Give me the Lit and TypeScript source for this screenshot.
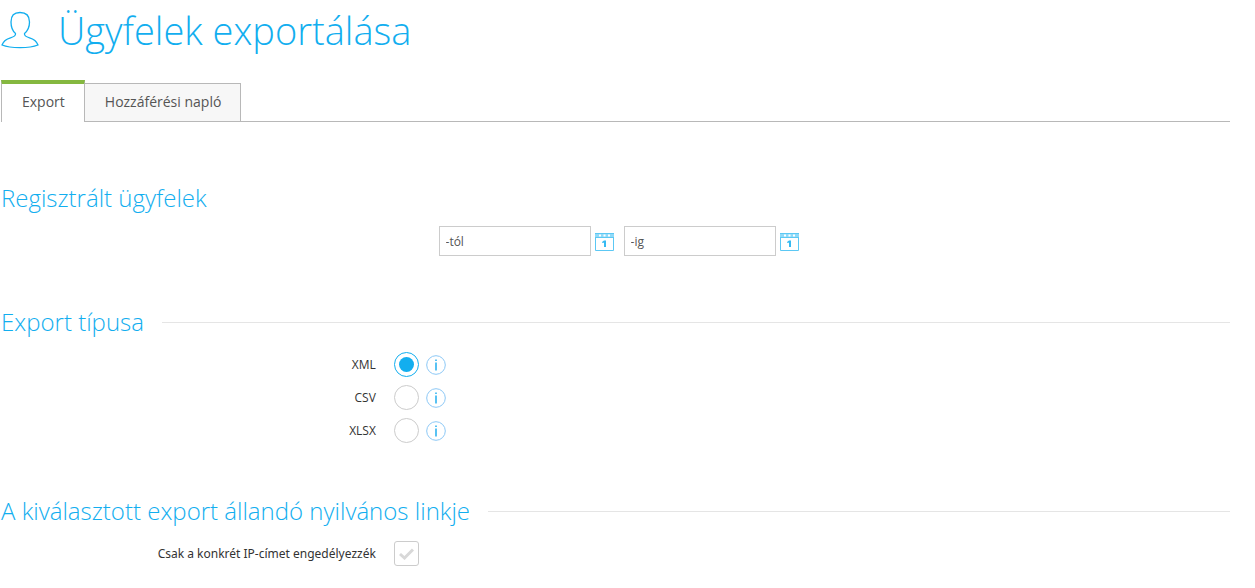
import { LitElement, html, css } from "lit";
import { customElement, state } from "lit/decorators.js";

const userIcon = html`<svg class="user" width="38" height="38" viewBox="0 0 38 38" fill="none" stroke="currentColor" stroke-width="1.3" aria-hidden="true">
  <path d="M14.500 22.500C11.500 20 10 16 10 11C10 4.500 13 1.500 19 1.500S28.500 4.500 28.500 11C28.500 16 26.500 20 23.500 22.500C23 25 25 25.800 28.500 26.800C33.500 28.200 35.500 30 37 34C32 36 26 36.600 19 36.600S6 36 1 34C2.500 30 4.500 28.200 9.500 26.800C13 25.800 15 25 14.500 22.500Z"/>
</svg>`;

const calendarIcon = html`<svg width="19" height="19" viewBox="0 0 19 19" aria-hidden="true">
  <path d="M0 1H19V6H0Z" fill="#90daf8"/>
  <path d="M0.500 5.500V18.500H18.500V5.500" fill="none" stroke="#5cc8f4"/>
  <path d="M0 1.500H19M0 5.500H19" stroke="#5cc8f4"/>
  <path d="M4 3.500h2M8.500 3.500h2M13 3.500h2" stroke="#fff" stroke-width="2"/>
  <path d="M7 10l2-1.500h2V15H9V10.800H7Z" fill="#35baf2"/>
</svg>`;

const infoIcon = html`<svg width="20" height="20" viewBox="0 0 20 20" fill="none" aria-hidden="true">
  <circle cx="10" cy="10" r="9.300" stroke="#8cc8f6"/>
  <path d="M10 7.500V15.500M10 4.500V6" stroke="#12a9ee" stroke-width="1.400"/>
</svg>`;

@customElement("app-root")
export class AppRoot extends LitElement {
  @state() private type = "XML";

  static styles = css`
    :host { display: block; font-family: "Open Sans", sans-serif; color: #333; background: #fff; font-size: 12px; line-height: 18px; }
    * { box-sizing: border-box; }
    main { padding: 0 25px 16px 1px; }
    svg { display: block; flex: none; }
    h1, h2 { margin: 0; font-weight: 300; color: #12aeef; }
    h1 { display: flex; align-items: center; gap: 19px; font-size: 38px; line-height: 60px; }
    h2 { display: flex; align-items: center; gap: 18px; margin-bottom: 10px; font-size: 24px; line-height: 32px; }
    .ruled::after { content: ""; flex: 1; height: 1px; background: #e5e5e5; }
    .tabs { display: flex; align-items: flex-end; margin: 20px 0 60px; border-bottom: 1px solid #b8b8b8; }
    .tab { height: 38px; padding: 0 19px 0 20px; border: solid #b8b8b8; border-width: 1px 1px 0 0; background: #f7f7f7; color: #555; font-size: 14px; line-height: 36px; text-decoration: none; }
    .tab.active { height: 42px; margin-bottom: -1px; border-width: 4px 1px 0 1px; border-top-color: #85b840; background: #fff; }
    section + section { margin-top: 48px; }
    .dates { display: flex; align-items: center; gap: 10px; height: 34px; padding-left: 35.6%; }
    .date { display: flex; align-items: center; gap: 4px; }
    .date input { width: 152px; height: 30px; margin: 0; padding: 0 6px; border: 1px solid #ccc; border-radius: 0; font: inherit; color: #555; }
    .date input::placeholder { color: #555; opacity: 1; }
    button { padding: 0; border: 0; background: none; cursor: pointer; }
    .row { display: grid; grid-template-columns: 30.5% 1fr; column-gap: 18px; align-items: center; height: 33px; }
    .row label { text-align: right; }
    .wide { font-family: "Noto Sans", "Open Sans", sans-serif; }
    .control { display: flex; align-items: center; gap: 7px; }
    .radio, .check { display: grid; place-items: center; appearance: none; width: 25px; height: 25px; margin: 0; border: 1px solid #ccc; background: #fff; }
    .radio { border-radius: 50%; }
    .radio:checked { border-color: #12aeef; }
    .radio:checked::before { content: ""; width: 15px; height: 15px; border-radius: 50%; background: #12aeef; }
    .check-box { display: grid; }
    .check-box > * { grid-area: 1 / 1; place-self: center; }
    .check { border-radius: 3px; }
    .check-box svg { pointer-events: none; }
    .mark { color: #d8d8d8; }
    .check:checked + .mark { color: #12aeef; }
  `;

  private date(id: string, text: string) {
    return html`<div class="date">
      <input id=${id} type="text" placeholder=${text} aria-label=${text} />
      <button type="button" aria-label=${text}>${calendarIcon}</button>
    </div>`;
  }

  private option(name: string) {
    return html`<div class="row">
      <label for=${name}>${name}</label>
      <div class="control">
        <input class="radio" type="radio" name="type" id=${name} .checked=${this.type === name} @change=${() => (this.type = name)} />
        <button type="button" aria-label=${name}>${infoIcon}</button>
      </div>
    </div>`;
  }

  render() {
    return html`<main>
      <h1>${userIcon}Ügyfelek exportálása</h1>
      <nav class="tabs">
        <a class="tab active" href="#export">Export</a>
        <a class="tab" href="#log">Hozzáférési napló</a>
      </nav>
      <section>
        <h2>Regisztrált ügyfelek</h2>
        <div class="dates">${this.date("from", "-tól")}${this.date("to", "-ig")}</div>
      </section>
      <section>
        <h2 class="ruled">Export típusa</h2>
        ${["XML", "CSV", "XLSX"].map((name) => this.option(name))}
      </section>
      <section>
        <h2 class="ruled">A kiválasztott export állandó nyilvános linkje</h2>
        <div class="row">
          <label class="wide" for="ip">Csak a konkrét IP-címet engedélyezzék</label>
          <div class="control">
            <span class="check-box">
              <input class="check" type="checkbox" id="ip" />
              <svg class="mark" width="15" height="12" viewBox="0 0 15 12" fill="none" stroke="currentColor" stroke-width="3" aria-hidden="true"><path d="M1 6l4.500 4L14 1.500"/></svg>
            </span>
          </div>
        </div>
      </section>
    </main>`;
  }
}
